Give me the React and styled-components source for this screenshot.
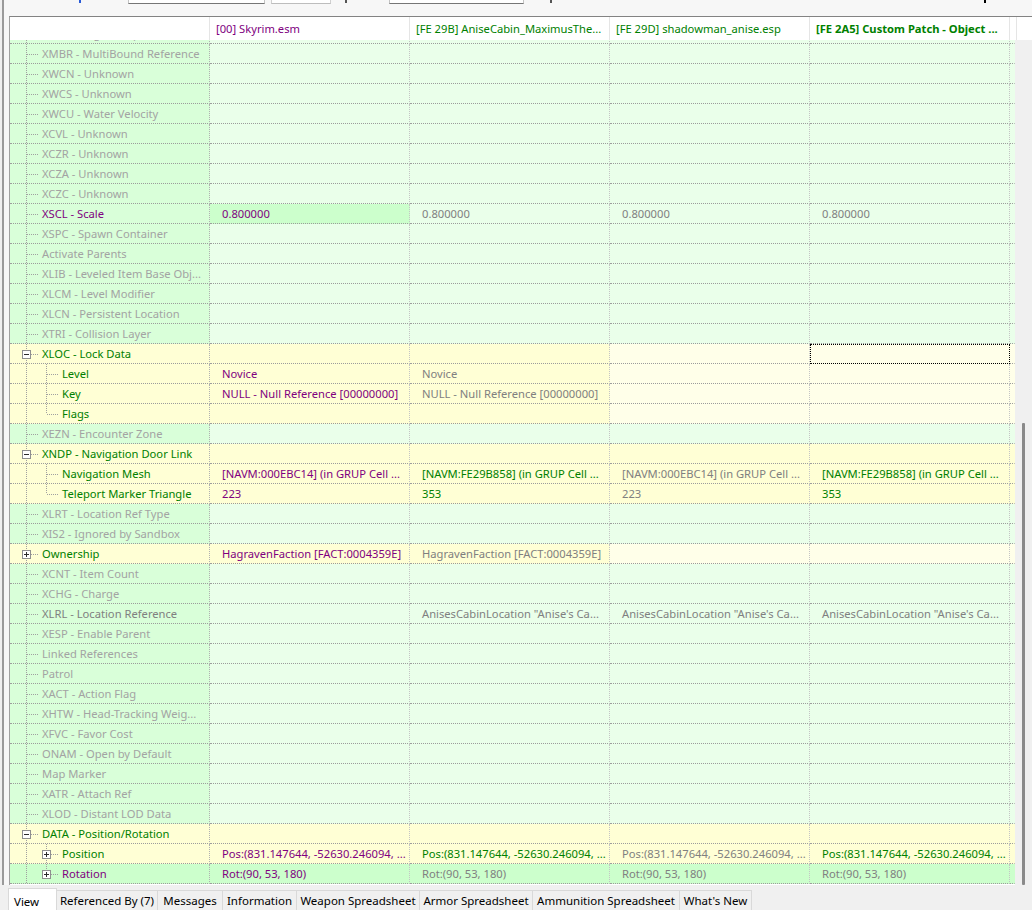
import React from 'react';
import styled, { createGlobalStyle } from 'styled-components';

const Global = createGlobalStyle`
  html, body { margin: 0; padding: 0; background: #f0f0f0; }
  body { font-family: "Noto Sans", "Open Sans", sans-serif; font-size: 11.2px; }
  * { box-sizing: border-box; }
`;

const C = {
  gray: '#a3a3a3',
  dgray: '#808080',
  vgray: '#808080',
  purple: '#800080',
  green: '#008000',
};
const BG = {
  g: '#d9ffd9',
  gp: '#eaffea',
  gm: '#ccffcc',
  y: '#ffffd5',
  yp: '#ffffe9',
};

const Window = styled.div`
  width: 1032px;
  height: 910px;
  overflow: hidden;
  display: flex;
  flex-direction: column;
  background: #f0f0f0;
`;

const Main = styled.div`
  margin-left: 2px;
  border-left: 2px solid #9a9a9a;
  padding-left: 5px;
  background: #f7f7f7;
  display: flex;
  flex-direction: column;
`;

const TopBar = styled.div`
  height: 16px;
  display: flex;
  align-items: flex-start;
`;

const Field = styled.div`
  margin-left: ${(p) => p.$ml}px;
  width: ${(p) => p.$w}px;
  height: 4px;
  background: #fff;
  border: 1px solid ${(p) => (p.$light ? '#d0d0d0' : '#c4c4c4')};
  border-top: none;
  border-bottom-color: ${(p) => (p.$light ? '#bdbdbd' : '#767676')};
`;

const Mark = styled.div`
  margin-left: ${(p) => p.$ml}px;
  width: 2px;
  height: 3px;
  background: ${(p) => p.$c};
`;

const Grid = styled.div`
  width: 1023px;
  border-top: 1px solid #838383;
  border-left: 1px solid #a0a0a0;
  background: #fff;
  display: flex;
  flex-direction: column;
`;

const Header = styled.div`
  display: flex;
  height: 23px;
  background: #fff;
`;

const HeadCell = styled.div`
  width: ${(p) => p.$w}px;
  flex: none;
  border-right: 1px solid #e5e5e5;
  padding-left: 6px;
  padding-top: 1px;
  line-height: 22px;
  white-space: nowrap;
  overflow: hidden;
  color: ${(p) => p.$c || '#000'};
  font-weight: ${(p) => (p.$bold ? 700 : 400)};
`;

const Body = styled.div`
  display: flex;
  height: 845px;
`;

const Viewport = styled.div`
  width: 1005px;
  overflow: hidden;
`;

const List = styled.div`
  margin-top: -16px;
`;

const Row = styled.div`
  display: flex;
  height: 20px;
`;

const NameCell = styled.div`
  width: 200px;
  flex: none;
  display: flex;
  align-items: flex-start;
  background: ${(p) => p.$bg};
  color: ${(p) => p.$c};
  border-right: 1px dotted #b0b0b0;
  border-bottom: 1px dotted #9c9c9c;
  white-space: nowrap;
  overflow: hidden;
  line-height: 20px;
`;

const Tree = styled.svg`
  flex: none;
  display: block;
`;

const ValueCell = styled.div`
  width: ${(p) => p.$w || 200}px;
  flex: none;
  background: ${(p) => p.$bg};
  color: ${(p) => p.$c};
  padding-left: ${(p) => (p.$w ? 0 : 12)}px;
  border-right: 1px dotted ${(p) => (p.$w ? 'transparent' : '#c4c4c4')};
  border-bottom: 1px dotted #9c9c9c;
  line-height: 20px;
  white-space: nowrap;
  overflow: hidden;
  outline: ${(p) => (p.$focus ? '1px dotted #000' : 'none')};
  outline-offset: -1px;
`;

const ScrollTrack = styled.div`
  width: 17px;
  background: #f0f0f0;
  padding: 383px 0 0 7px;
  display: flex;
`;

const Thumb = styled.div`
  width: 3px;
  background: #8a8a8a;
  border-radius: 1px;
`;

const TabBar = styled.div`
  height: 25px;
  display: flex;
  align-items: flex-end;
  padding-left: 8px;
  background: #f0f0f0;
`;

const Tab = styled.div`
  width: ${(p) => p.$w}px;
  height: ${(p) => (p.$active ? 22 : 20)}px;
  margin-right: -1px;
  border: 1px solid #d9d9d9;
  border-bottom: none;
  background: ${(p) => (p.$active ? '#ffffff' : '#f0f0f0')};
  color: #000;
  padding-top: ${(p) => (p.$active ? 3 : 0)}px;
  padding-left: ${(p) => (p.$active ? 5 : 0)}px;
  text-align: ${(p) => (p.$active ? 'left' : 'center')};
  line-height: 19px;
  font-size: 11.5px;
  white-space: nowrap;
  position: relative;
  z-index: ${(p) => (p.$active ? 1 : 0)};
`;

const DOT = '#a0a0a0';

function TreeLines({ depth, exp, last }) {
  const w = depth === 0 ? 32 : 52;
  const bx = depth === 0 ? 16 : 36;
  const parts = [];
  parts.push(<line key="v0" x1="16.5" y1="0" x2="16.5" y2="19" />);
  if (depth === 1) {
    parts.push(<line key="v1" x1="36.5" y1="0" x2="36.5" y2={last ? 10 : 19} />);
  }
  const hx = exp ? bx + 5 : bx + 1;
  parts.push(<line key="h" x1={hx} y1="10.5" x2={bx + 13} y2="10.5" />);
  return (
    <Tree width={w} height={19} viewBox={`0 0 ${w} 19`} shapeRendering="crispEdges">
      <g stroke={DOT} strokeWidth="1" strokeDasharray="1 1">{parts}</g>
      {exp && (
        <g>
          <rect x={bx - 3.5} y="6.5" width="8" height="8" fill="#fff" stroke="#8f8f8f" />
          <rect x={bx - 2} y="10" width="5" height="1" fill="#2b2b2b" />
          {exp === 'plus' && <rect x={bx} y="8" width="1" height="5" fill="#2b2b2b" />}
        </g>
      )}
    </Tree>
  );
}

const E = (bg) => ['', C.gray, bg];
const greenEmpty = [E(BG.gp), E(BG.gp), E(BG.gp), E(BG.gp)];
const gray = (name) => ({ name, c: C.gray, bg: BG.g, cells: greenEmpty });

const pos = 'Pos:(831.147644, -52630.246094, ...';
const rot = 'Rot:(90, 53, 180)';
const nullRef = 'NULL - Null Reference [00000000]';
const navA = '[NAVM:000EBC14] (in GRUP Cell ...';
const navB = '[NAVM:FE29B858] (in GRUP Cell ...';
const hag = 'HagravenFaction [FACT:0004359E]';
const loc = 'AnisesCabinLocation "Anise\'s Ca...';

const rows = [
  gray('XRGB - Ragdoll Biped Data'),
  gray('XMBR - MultiBound Reference'),
  gray('XWCN - Unknown'),
  gray('XWCS - Unknown'),
  gray('XWCU - Water Velocity'),
  gray('XCVL - Unknown'),
  gray('XCZR - Unknown'),
  gray('XCZA - Unknown'),
  gray('XCZC - Unknown'),
  {
    name: 'XSCL - Scale', c: C.purple, bg: BG.g,
    cells: [['0.800000', C.purple, BG.gm], ['0.800000', C.vgray, BG.gp], ['0.800000', C.vgray, BG.gp], ['0.800000', C.vgray, BG.gp]],
  },
  gray('XSPC - Spawn Container'),
  gray('Activate Parents'),
  gray('XLIB - Leveled Item Base Obj...'),
  gray('XLCM - Level Modifier'),
  gray('XLCN - Persistent Location'),
  gray('XTRI - Collision Layer'),
  {
    name: 'XLOC - Lock Data', c: C.green, bg: BG.y, exp: 'minus',
    cells: [E(BG.y), E(BG.y), E(BG.yp), ['', C.gray, BG.yp, true]],
  },
  {
    name: 'Level', depth: 1, c: C.green, bg: BG.y,
    cells: [['Novice', C.purple, BG.y], ['Novice', C.vgray, BG.y], E(BG.yp), E(BG.yp)],
  },
  {
    name: 'Key', depth: 1, c: C.green, bg: BG.y,
    cells: [[nullRef, C.purple, BG.y], [nullRef, C.vgray, BG.y], E(BG.yp), E(BG.yp)],
  },
  {
    name: 'Flags', depth: 1, last: true, c: C.green, bg: BG.y,
    cells: [E(BG.y), E(BG.y), E(BG.yp), E(BG.yp)],
  },
  gray('XEZN - Encounter Zone'),
  {
    name: 'XNDP - Navigation Door Link', c: C.green, bg: BG.y, exp: 'minus',
    cells: [E(BG.y), E(BG.y), E(BG.y), E(BG.y)],
  },
  {
    name: 'Navigation Mesh', depth: 1, c: C.green, bg: BG.y,
    cells: [[navA, C.purple, BG.y], [navB, C.green, BG.y], [navA, C.vgray, BG.y], [navB, C.green, BG.y]],
  },
  {
    name: 'Teleport Marker Triangle', depth: 1, last: true, c: C.green, bg: BG.y,
    cells: [['223', C.purple, BG.y], ['353', C.green, BG.y], ['223', C.vgray, BG.y], ['353', C.green, BG.y]],
  },
  gray('XLRT - Location Ref Type'),
  gray('XIS2 - Ignored by Sandbox'),
  {
    name: 'Ownership', c: C.green, bg: BG.y, exp: 'plus',
    cells: [[hag, C.purple, BG.y], [hag, C.vgray, BG.y], E(BG.yp), E(BG.yp)],
  },
  gray('XCNT - Item Count'),
  gray('XCHG - Charge'),
  {
    name: 'XLRL - Location Reference', c: C.dgray, bg: BG.g,
    cells: [E(BG.gp), [loc, C.vgray, BG.gp], [loc, C.vgray, BG.gp], [loc, C.vgray, BG.gp]],
  },
  gray('XESP - Enable Parent'),
  gray('Linked References'),
  gray('Patrol'),
  gray('XACT - Action Flag'),
  gray('XHTW - Head-Tracking Weig...'),
  gray('XFVC - Favor Cost'),
  gray('ONAM - Open by Default'),
  gray('Map Marker'),
  gray('XATR - Attach Ref'),
  gray('XLOD - Distant LOD Data'),
  {
    name: 'DATA - Position/Rotation', c: C.green, bg: BG.y, exp: 'minus',
    cells: [E(BG.y), E(BG.y), E(BG.y), E(BG.y)],
  },
  {
    name: 'Position', depth: 1, c: C.green, bg: BG.y, exp: 'plus',
    cells: [[pos, C.purple, BG.y], [pos, C.green, BG.y], [pos, C.vgray, BG.y], [pos, C.green, BG.y]],
  },
  {
    name: 'Rotation', depth: 1, last: true, c: C.purple, bg: BG.gm, exp: 'plus',
    cells: [[rot, C.purple, BG.gm], [rot, C.vgray, BG.gm], [rot, C.vgray, BG.gm], [rot, C.vgray, BG.gm]],
  },
];

const headers = [
  { t: '[00] Skyrim.esm', c: C.purple },
  { t: '[FE 29B] AniseCabin_MaximusThe...', c: C.green },
  { t: '[FE 29D] shadowman_anise.esp', c: C.green },
  { t: '[FE 2A5] Custom Patch - Object ...', c: C.green, bold: true },
];

const tabs = [
  { t: 'View', w: 49, active: true },
  { t: 'Referenced By (7)', w: 102 },
  { t: 'Messages', w: 66 },
  { t: 'Information', w: 75 },
  { t: 'Weapon Spreadsheet', w: 124 },
  { t: 'Armor Spreadsheet', w: 114 },
  { t: 'Ammunition Spreadsheet', w: 148 },
  { t: "What's New", w: 73 },
];

export default function App() {
  return (
    <Window>
      <Global />
      <Main>
        <TopBar>
          <Mark $ml={70} $c="#2a5bd7" />
          <Field $ml={47} $w={137} />
          <Field $ml={6} $w={60} $light />
          <Mark $ml={14} $c="#555" />
          <Field $ml={42} $w={135} />
          <Mark $ml={26} $c="#555" />
          <Mark $ml={432} $c="#000" />
        </TopBar>
        <Grid>
          <Header>
            <HeadCell $w={200} />
            {headers.map((h) => (
              <HeadCell key={h.t} $w={200} $c={h.c} $bold={h.bold}>{h.t}</HeadCell>
            ))}
            <HeadCell $w={5} />
          </Header>
          <Body>
            <Viewport>
              <List>
                {rows.map((r) => (
                  <Row key={r.name}>
                    <NameCell $bg={r.bg} $c={r.c}>
                      <TreeLines depth={r.depth || 0} exp={r.exp} last={r.last} />
                      {r.name}
                    </NameCell>
                    {r.cells.map(([t, c, bg, focus], i) => (
                      <ValueCell key={i} $bg={bg} $c={c} $focus={focus}>{t}</ValueCell>
                    ))}
                    <ValueCell $w={5} $bg={r.cells[3][2]} />
                  </Row>
                ))}
              </List>
            </Viewport>
            <ScrollTrack>
              <Thumb />
            </ScrollTrack>
          </Body>
        </Grid>
      </Main>
      <TabBar>
        {tabs.map((t) => (
          <Tab key={t.t} $w={t.w} $active={t.active}>{t.t}</Tab>
        ))}
      </TabBar>
    </Window>
  );
}
